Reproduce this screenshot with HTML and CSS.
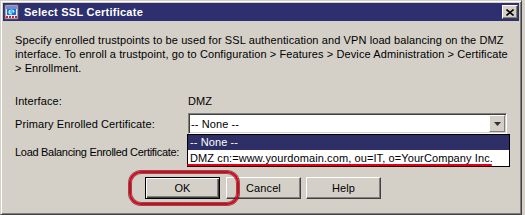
FILE: index.html
```html
<!DOCTYPE html>
<html>
<head>
<meta charset="utf-8">
<link rel="stylesheet" href="styles.css">
</head>
<body>
<div class="window">
  <div class="titlebar">
    <svg class="ticon" width="16" height="16" viewBox="0 0 16 16">
      <rect x="1" y="1" width="13" height="14" fill="#e8e8f0" stroke="#5a5a78" stroke-width="1"/>
      <rect x="2" y="2" width="11" height="3" fill="#7a88c8"/>
      <rect x="3" y="5" width="9" height="6" fill="#1e6fd8"/>
      <path d="M5 8 H10 M5 8 Q5 6 7.5 6 Q10 6 10 8 M5 8 Q5 10 8 10" stroke="#9ff" stroke-width="1.2" fill="none"/>
      <rect x="2" y="12" width="11" height="2" fill="#d02020"/>
      <rect x="4" y="12" width="1" height="2" fill="#fff"/>
      <rect x="7" y="12" width="1" height="2" fill="#fff"/>
      <rect x="10" y="12" width="1" height="2" fill="#fff"/>
    </svg>
    <span class="title">Select SSL Certificate</span>
    <div class="close">
      <svg width="8" height="7" viewBox="0 0 8 7"><path d="M0.5 0.5 L7.5 6.5 M7.5 0.5 L0.5 6.5" stroke="#000" stroke-width="1.6"/></svg>
    </div>
  </div>
  <div class="content">
    <p class="desc">Specify enrolled trustpoints to be used for SSL authentication and VPN load balancing on the DMZ<br>interface. To enroll a trustpoint, go to Configuration &gt; Features &gt; Device Administration &gt; Certificate<br>&gt; Enrollment.</p>
    <div class="row r1"><span class="label">Interface:</span><span class="value">DMZ</span></div>
    <div class="row r2"><span class="label">Primary Enrolled Certificate:</span>
      <div class="combo">
        <span class="ctext">-- None --</span>
        <div class="dbtn"><svg width="7" height="4" viewBox="0 0 7 4"><path d="M0 0 H7 L3.5 4 Z" fill="#333"/></svg></div>
        <div class="list">
          <div class="item sel">-- None --</div>
          <div class="item">DMZ cn:=www.yourdomain.com, ou=IT, o=YourCompany Inc.</div>
        </div>
        <div class="mark"></div>
      </div>
    </div>
    <div class="row r3"><span class="label tight">Load Balancing Enrolled Certificate:</span>
      <div class="combo"></div>
    </div>
    <div class="buttons">
      <div class="btn default">OK</div>
      <div class="btn">Cancel</div>
      <div class="btn">Help</div>
      <div class="ring"></div>
    </div>
  </div>
</div>
</body>
</html>
```
FILE: styles.css
```css
html, body {
  margin: 0;
  padding: 0;
}
body {
  background: #d4d0c8;
  width: 525px;
  height: 215px;
  overflow: hidden;
  font-family: "Liberation Sans", Arial, sans-serif;
  font-size: 11px;
  letter-spacing: 0.1px;
  color: #000;
}
.window {
  width: 522px;
  height: 215px;
  box-sizing: border-box;
  border: 1px solid;
  border-color: #d4d0c8 #404040 #404040 #d4d0c8;
  box-shadow: inset 1px 1px #fff, inset -1px -1px #808080;
  padding: 2px;
  background: #d4d0c8;
}
.titlebar {
  height: 18px;
  background: #2d2f6e;
  display: flex;
  align-items: center;
}
.ticon {
  margin-left: 1px;
  flex: none;
}
.title {
  margin-left: 4px;
  color: #fff;
  font-weight: bold;
  font-size: 11px;
  letter-spacing: 0.25px;
  line-height: 18px;
  flex: 1;
}
.close {
  width: 16px;
  height: 14px;
  box-sizing: border-box;
  margin-right: 1px;
  background: #d4d0c8;
  border: 1px solid;
  border-color: #fff #404040 #404040 #fff;
  box-shadow: inset -1px -1px #808080;
  display: flex;
  align-items: center;
  justify-content: center;
}
.content {
  padding: 0 12px;
}
.desc {
  margin: 12px 0 0;
  line-height: 14px;
  white-space: nowrap;
}
.row {
  display: flex;
  align-items: center;
}
.label {
  width: 173px;
  flex: none;
  line-height: 14px;
  white-space: nowrap;
}
.label.tight {
  letter-spacing: -0.3px;
}
.r1 { margin-top: 19px; height: 14px; }
.r2 { margin-top: 5px; height: 21px; }
.r3 { margin-top: 7px; height: 21px; }
.combo {
  position: relative;
  width: 320px;
  height: 21px;
  box-sizing: border-box;
  background: #fff;
  border: 1px solid;
  border-color: #808080 #fff #fff #808080;
  box-shadow: inset 1px 1px #404040, inset -1px -1px #d4d0c8;
  display: flex;
  align-items: center;
}
.ctext {
  flex: 1;
  padding-left: 2px;
}
.dbtn {
  width: 16px;
  height: 17px;
  margin-right: 1px;
  box-sizing: border-box;
  background: #d4d0c8;
  border: 1px solid;
  border-color: #fff #808080 #808080 #fff;
  display: flex;
  align-items: center;
  justify-content: center;
}
.list {
  position: absolute;
  left: -2px;
  top: 20px;
  width: 323px;
  box-sizing: border-box;
  border: 1px solid #000;
  background: #fff;
  z-index: 2;
}
.item {
  height: 16px;
  line-height: 16px;
  padding-left: 2px;
  white-space: nowrap;
}
.item.sel {
  height: 15px;
  line-height: 15px;
  background: #2e2f66;
  color: #fff;
}
.mark {
  position: absolute;
  left: -2px;
  top: 50px;
  width: 305px;
  height: 2px;
  background: #e4001a;
  border-radius: 1px;
  box-shadow: 0 1px 0 rgba(90,0,0,0.5);
  z-index: 3;
}
.buttons {
  position: relative;
  margin-top: 15px;
  padding-left: 130px;
  display: flex;
  gap: 6px;
}
.btn {
  width: 75px;
  height: 22px;
  box-sizing: border-box;
  background: #d4d0c8;
  border: 1px solid;
  border-color: #fff #404040 #404040 #fff;
  box-shadow: inset -1px -1px #808080;
  display: flex;
  align-items: center;
  justify-content: center;
}
.btn + .btn + .btn {
  margin-left: -1px;
}
.btn.default {
  border: 1px solid #000;
  box-shadow: inset 1px 1px #fff, inset -1px -1px #404040, inset -2px -2px #808080;
}
.ring {
  position: absolute;
  left: 114px;
  top: -6px;
  width: 110px;
  height: 34px;
  box-sizing: border-box;
  border: 2px solid #e4001a;
  border-radius: 12px;
  box-shadow: 0 0 0 1px rgba(70,0,0,0.6), inset 0 0 0 1px rgba(70,0,0,0.6);
}
```
